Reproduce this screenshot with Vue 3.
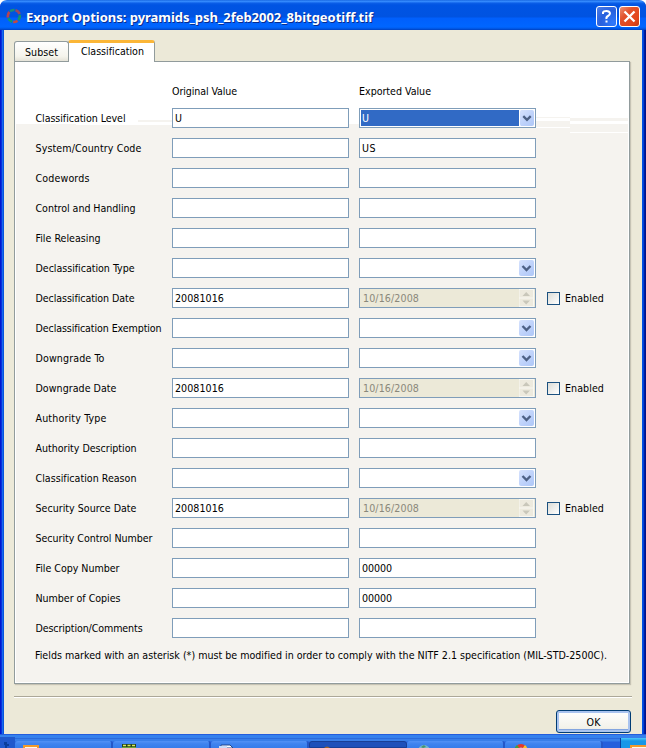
<script setup>
const rows = [
  { label: 'Classification Level', w: 90, original: 'U', value: 'U', kind: 'combo', active: true },
  { label: 'System/Country Code', w: 106, value: 'US' },
  { label: 'Codewords', w: 54 },
  { label: 'Control and Handling', w: 100 },
  { label: 'File Releasing', w: 65 },
  { label: 'Declassification Type', w: 99, kind: 'combo' },
  { label: 'Declassification Date', w: 99, original: '20081016', value: '10/16/2008', kind: 'date' },
  { label: 'Declassification Exemption', w: 126, kind: 'combo' },
  { label: 'Downgrade To', w: 69, kind: 'combo' },
  { label: 'Downgrade Date', w: 81, original: '20081016', value: '10/16/2008', kind: 'date' },
  { label: 'Authority Type', w: 71, kind: 'combo' },
  { label: 'Authority Description', w: 101 },
  { label: 'Classification Reason', w: 101, kind: 'combo' },
  { label: 'Security Source Date', w: 101, original: '20081016', value: '10/16/2008', kind: 'date' },
  { label: 'Security Control Number', w: 117 },
  { label: 'File Copy Number', w: 84, value: '00000' },
  { label: 'Number of Copies', w: 85, value: '00000' },
  { label: 'Description/Comments', w: 107 },
]
const valueWidths = { U: 8, US: 14, '20081016': 49, '10/16/2008': 56, '00000': 30 }

// Adjusts tracking so that a label occupies its designed width.
const vFit = {
  mounted(el, { value }) {
    const n = el.textContent.length
    const natural = el.getBoundingClientRect().width
    if (value && n > 1) el.style.letterSpacing = `${(value - natural) / n}px`
  },
}
</script>

<template>
  <div class="screen">
    <div class="window">
      <header class="titlebar">
        <svg class="app-icon" width="16" height="16" viewBox="0 0 16 16" fill="none" stroke-width="2.6">
          <path d="M2 9.5A6 6 0 0 1 3.5 4" stroke="#b8434d" />
          <path d="M4 3.2A6 6 0 0 1 8.5 2" stroke="#1c8c78" />
          <path d="M9.5 2.3A6 6 0 0 1 13.6 6" stroke="#9b4860" />
          <path d="M13.8 7A6 6 0 0 1 12.3 12" stroke="#16956a" />
          <path d="M11.5 12.8A6 6 0 0 1 7.2 14" stroke="#c04a42" />
          <path d="M6.3 13.7A6 6 0 0 1 2.4 10.2" stroke="#129a62" />
        </svg>
        <h1><span v-fit="347">Export Options: pyramids_psh_2feb2002_8bitgeotiff.tif</span></h1>
        <button class="cap help" aria-label="Help">
          <svg width="19" height="19" viewBox="0 0 19 19" fill="none" stroke="#fff" stroke-width="2">
            <path d="M6 7V5.5Q6.5 4 9.5 4T13 6.3Q13 8 11 9T9.5 12" /><path d="M9.5 13.5V15.5" />
          </svg>
        </button>
        <button class="cap close" aria-label="Close">
          <svg width="19" height="19" viewBox="0 0 19 19" stroke="#fff" stroke-width="2.3"><path d="M4.5 4.5L14.5 14.5M14.5 4.5L4.5 14.5" /></svg>
        </button>
      </header>

      <main class="body">
        <nav class="tabs">
          <div class="tab"><span v-fit="33">Subset</span></div>
          <div class="tab selected"><span v-fit="63">Classification</span></div>
        </nav>
        <section class="panel">
          <div class="row head">
            <i></i><span><span v-fit="65">Original Value</span></span><span><span v-fit="72">Exported Value</span></span>
          </div>
          <div v-for="r in rows" :key="r.label" class="row">
            <label><span v-fit="r.w">{{ r.label }}</span></label>
            <div class="field"><span v-if="r.original" v-fit="valueWidths[r.original]">{{ r.original }}</span></div>
            <div class="field" :class="[r.kind, { active: r.active }]">
              <div class="text"><span v-if="r.value" v-fit="valueWidths[r.value]">{{ r.value }}</span></div>
              <svg v-if="r.kind === 'combo'" class="drop" width="15" height="16" viewBox="0 0 15 16">
                <path d="M3.5 6L7.5 10L11.5 6" fill="none" stroke="#4d6185" stroke-width="2.4" />
              </svg>
              <svg v-if="r.kind === 'date'" class="spin" width="15" height="18" viewBox="0 0 15 18">
                <rect x=".5" y="1" width="13.5" height="7.5" fill="#edeade" /><rect x=".5" y="9.5" width="13.5" height="7.5" fill="#edeade" />
                <path d="M3.5 7L7.2 3L11 7ZM3.5 11.5L7.2 15.5L11 11.5Z" fill="#c9c7ba" />
              </svg>
            </div>
            <div v-if="r.kind === 'date'" class="check"><i class="box"></i><span v-fit="39">Enabled</span></div>
          </div>
          <p class="note"><span v-fit="572">Fields marked with an asterisk (*) must be modified in order to comply with the NITF 2.1 specification (MIL-STD-2500C).</span></p>
        </section>
        <hr />
        <footer><button class="ok"><span v-fit="14">OK</span></button></footer>
      </main>
    </div>

    <div class="taskbar">
      <svg class="chev" width="15" height="11" viewBox="0 0 15 11"><path d="M4 5h3v2h2v2h-2v2h-2v-3h-1z" fill="#0a3e9d" /></svg>
      <div class="task first">
        <svg width="16" height="7" viewBox="0 0 16 7"><rect x="1" y="5" width="14" height="6" fill="#fff9e8" stroke="#f39a2d" stroke-width="2" /></svg>
      </div>
      <div class="task">
        <svg width="16" height="7" viewBox="0 0 16 7"><path d="M1 4.5H15" stroke="#25431c" stroke-width="3" /><path d="M2 4.5H15" stroke="#dce95b" stroke-width="1.6" stroke-dasharray="3 1.5" /><path d="M1 6.5H15" stroke="#6aa23b" stroke-width="1" /></svg>
      </div>
      <div class="task">
        <svg width="16" height="7" viewBox="0 0 16 7"><path d="M2 7V4H11L14 7Z" fill="#fff" stroke="#23478f" /><path d="M0 5H8V7H0Z" fill="#c9dbf8" /></svg>
      </div>
      <div class="task pressed">
        <svg width="16" height="7" viewBox="0 0 16 7"><path d="M6 6Q9 3 12 6" fill="#a0632a" /></svg>
      </div>
      <div class="task">
        <svg width="16" height="7" viewBox="0 0 16 7"><circle cx="9" cy="10" r="6" fill="#79b9cc" /><path d="M6 6L9 4L11 6L8 7Z" fill="#4a936c" /></svg>
      </div>
      <div class="task last">
        <svg width="16" height="7" viewBox="0 0 16 7"><circle cx="8" cy="9.5" r="6.5" fill="#e4382c" /><path d="M8 9.5L4 4A6.5 6.5 0 0 0 1.5 9.5Z" fill="#3da342" /><path d="M8 9.5L12 4A6.5 6.5 0 0 1 14.5 9.5Z" fill="#f6c62c" /><circle cx="8" cy="9" r="2.5" fill="#9bc4f5" /></svg>
      </div>
      <div class="tray"><svg width="17" height="9" viewBox="0 0 17 9"><rect x="1" y="4" width="18" height="9" fill="#fff9e8" stroke="#f39a2d" stroke-width="2" /></svg></div>
    </div>
  </div>
</template>

<style>
body { margin: 0; background: #fff; overflow: hidden; }
</style>
<style scoped>
* { box-sizing: border-box; }
.screen { width: 646px; height: 748px; display: flex; flex-direction: column; overflow: hidden; font: 10.6px/14px "DejaVu Sans Condensed", "DejaVu Sans", sans-serif; font-stretch: condensed; color: #000; }
span { white-space: nowrap; }
button { font: inherit; padding: 0; margin: 0; }
.window { height: 734px; border-radius: 7px 7px 0 0; padding-right: 4px; padding-left: 4px; overflow: hidden; background: linear-gradient(90deg, #0019cf 0 1px, #0a31dc 1px 2px, #166aee 2px 3px, #0855dd 3px 4px, transparent 4px 642px, #0051e3 642px 643px, #0441d8 643px 644px, #001ea0 644px 645px, #00138c 645px); }
.titlebar { height: 30px; margin: 0 -4px; padding: 0 6px; display: flex; align-items: center; background: linear-gradient(#0b58d8 0, #3a91ff 1px, #2b80fa 2px, #0c5fe7 3px, #0054e3 5px, #0053e1 17px, #005ffc 18px, #0066ff 27px, #0053dd 29px, #003dba 30px); }
.app-icon { margin-top: 1px; }
h1 { flex: 1; margin: 3px 0 0 4px; font: bold 13px/18px "Noto Sans", sans-serif; color: #fff; text-shadow: 1px 1px 0 #0a2c8c; }
.cap { width: 21px; height: 21px; margin-top: 3px; border: 1px solid #fff; border-radius: 3px; display: flex; }
.help { background: radial-gradient(circle at 85% 85%, #2f79fc, #2860dd 55%, #4f7fe7); }
.close { margin-left: 2px; background: linear-gradient(135deg, #ed9074, #e2522c 35%, #e4461b 75%, #c63a12); }
.body { height: 704px; background: #ece9d8; padding: 9px 12px 0 10px; }
.tabs { display: flex; align-items: flex-end; height: 22px; }
.tab { width: 55px; height: 20px; border: 1px solid #919b9c; border-bottom: 0; border-radius: 3px 3px 0 0; background: linear-gradient(#fff, #f5f4ec 75%, #e5e3d8); padding: 3px 0 0 10px; }
.tab.selected { width: 87px; margin-left: -1px; margin-bottom: -1px; height: 22px; border-top: 3px solid #fbb637; background: #fff; padding: 1px 0 0 12px; position: relative; }
.panel {
  --g: linear-gradient(#f5f3ef, #f5f3ef);
  --w: linear-gradient(#fff, #fff);
  width: 616px; height: 623px; border: 1px solid #919b9c; box-shadow: inset -1px -1px 0 #fff, inset 1px 0 0 #fff, 1px 1px 1px #c6c3b4; padding: 22px 0 0 20px;
  background:
    var(--g) 520px 55px / 35px 1px no-repeat, var(--g) 520px 59px / 35px 3px no-repeat, var(--w) 520px 65px / 35px 1px no-repeat,
    var(--g) 555px 56px / 58px 3px no-repeat, var(--w) 555px 70px / 58px 1px no-repeat,
    var(--g) 123px 58px / 34px 2px no-repeat, var(--w) 61px 62px / 96px 1px no-repeat,
    linear-gradient(#fff 0 62px, #f5f3ef 62px);
}
.row { display: grid; grid-template-columns: 127px 177px 177px 1fr; column-gap: 10px; height: 20px; margin-bottom: 10px; align-items: center; }
label { padding-left: .5px; }
.head { height: 14px; }
.field { height: 20px; background: #fff; border: 1px solid #7f9db9; padding: 2px; display: flex; }
.text { flex: 1; height: 16px; }
.combo, .date { padding: 1px; }
.combo.active .text { background: #316ac5; color: #fff; padding-top: 1px; padding-left: 1px; }
.drop { background: linear-gradient(135deg, #d6e2fd, #bacffa 65%, #afc7f7); border-radius: 2px; }
.active .drop { border-left: 1px solid #fff; }
.field.date { background: #ece9d8; color: #8a887b; padding: 0 1px; }
.date .text { padding-top: 2px; padding-left: 2px; height: 18px; }
.spin { background: #f9f8f2; }
.check { display: flex; align-items: center; margin-left: 1px; }
.box { width: 13px; height: 13px; border: 1px solid #1c5180; background: linear-gradient(135deg, #dcdcd7, #fff); margin-right: 5px; }
.note { margin: 0; }
hr { width: 618px; height: 2px; border: 0; border-top: 1px solid #aca899; background: #fff; margin: 12px 0 12px; }
footer { display: flex; justify-content: flex-end; margin-right: -1px; }
.ok { width: 75px; height: 23px; border: 1px solid #003c74; border-radius: 3px; color: #000; background: linear-gradient(#fff, #f3f2ea 80%, #e7e5dc); box-shadow: inset 0 0 0 2px #a9c3ef, inset 0 -1px 0 2px #83a5e0; }
.taskbar { height: 14px; display: flex; align-items: flex-end; background: linear-gradient(#245edc 0 1px, #3581ed 1px 4px, #2b6bdc 4px 5px, #397fe9 5px 7px, #255fdc 8px); }
.chev { background: #2058cd; }
.task { width: 98px; height: 7px; border-radius: 3px 3px 0 0; background: linear-gradient(#5291f5, #3e83ef 3px, #377ce9); border-right: 2px solid #2558c8; padding-left: 8px; }
.task svg { display: block; }
.task.pressed { background: #1e50ba; border: 1px solid #183f96; }
.tray { margin-left: auto; width: 26px; height: 10px; background: linear-gradient(#4cc9f8, #1797e8 3px); border-left: 1px solid #0b3f9e; padding-left: 9px; }
.tray svg { display: block; margin-top: 4px; }
</style>
